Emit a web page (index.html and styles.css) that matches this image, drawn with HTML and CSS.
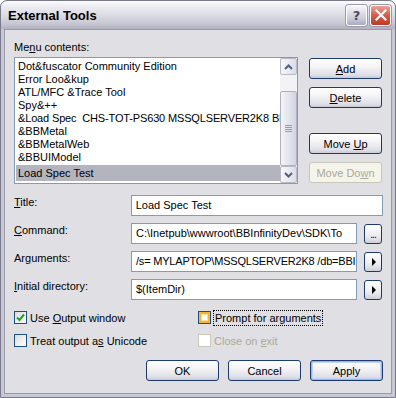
FILE: index.html
```html
<!DOCTYPE html>
<html lang="en">
<head>
  <meta charset="UTF-8" />
  <title>External Tools</title>
  <link rel="stylesheet" href="styles.css">
</head>
<body>
  <div class="window">
    <div class="titlebar">
      <span class="title">External Tools</span>
      <div class="caption-buttons">
        <div class="cap help">?</div>
        <div class="cap close">
          <svg width="12" height="12" viewBox="0 0 12 12"><path d="M1.5 1.5 L10.5 10.5 M10.5 1.5 L1.5 10.5" stroke="#fff" stroke-width="2.2" stroke-linecap="square"/></svg>
        </div>
      </div>
    </div>

    <div class="client">
      <div class="menu-label">Me<u>n</u>u contents:</div>

      <div class="top">
        <div class="listbox">
          <ul class="items">
            <li>Dot&amp;fuscator Community Edition</li>
            <li>Error Loo&amp;kup</li>
            <li>ATL/MFC &amp;Trace Tool</li>
            <li>Spy&amp;++</li>
            <li class="long">&amp;Load Spec&nbsp; CHS-TOT-PS630 MSSQLSERVER2K8 BB</li>
            <li>&amp;BBMetal</li>
            <li>&amp;BBMetalWeb</li>
            <li>&amp;BBUIModel</li>
            <li class="selected">Load Spec Test</li>
          </ul>
          <div class="scrollbar">
            <div class="sb-btn">
              <svg width="9" height="6" viewBox="0 0 9 6"><path d="M1 5 L4.5 1.5 L8 5" fill="none" stroke="#4d6185" stroke-width="2"/></svg>
            </div>
            <div class="sb-track">
              <div class="sb-thumb">
                <span></span><span></span><span></span><span></span>
              </div>
            </div>
            <div class="sb-btn">
              <svg width="9" height="6" viewBox="0 0 9 6"><path d="M1 1 L4.5 4.5 L8 1" fill="none" stroke="#4d6185" stroke-width="2"/></svg>
            </div>
          </div>
        </div>

        <div class="side-buttons">
          <button class="btn"><u>A</u>dd</button>
          <button class="btn"><u>D</u>elete</button>
          <button class="btn move-up">Move <u>U</u>p</button>
          <button class="btn disabled">Move Do<u>w</u>n</button>
        </div>
      </div>

      <div class="fields">
        <div class="field">
          <label><u>T</u>itle:</label>
          <div class="textbox">Load Spec Test</div>
        </div>
        <div class="field">
          <label><u>C</u>ommand:</label>
          <div class="textbox short">C:\Inetpub\wwwroot\BBInfinityDev\SDK\To</div>
          <button class="small-btn dots">...</button>
        </div>
        <div class="field">
          <label>Ar<u>g</u>uments:</label>
          <div class="textbox short tight">/s= MYLAPTOP\MSSQLSERVER2K8 /db=BBI</div>
          <button class="small-btn"><span class="tri"></span></button>
        </div>
        <div class="field">
          <label><u>I</u>nitial directory:</label>
          <div class="textbox short">$(ItemDir)</div>
          <button class="small-btn"><span class="tri"></span></button>
        </div>
      </div>

      <div class="checks">
        <div class="check"><span class="box checked">
          <svg width="9" height="9" viewBox="0 0 9 9"><path d="M1 4.5 L3.5 7 L8 1.5" fill="none" stroke="#21a121" stroke-width="2"/></svg>
        </span><span>Use <u>O</u>utput window</span></div>
        <div class="check"><span class="box hover"></span><span class="focus">Prompt for arguments</span></div>
        <div class="check"><span class="box"></span><span>Treat output a<u>s</u> Unicode</span></div>
        <div class="check disabled"><span class="box"></span><span>Close on <u>e</u>xit</span></div>
      </div>

      <div class="actions">
        <button class="btn">OK</button>
        <button class="btn">Cancel</button>
        <button class="btn default">Apply</button>
      </div>
    </div>
  </div>
</body>
</html>
```

FILE: styles.css
```css
body {
  margin: 0;
  font-family: "Liberation Sans", Arial, sans-serif;
  font-size: 11px;
  background: #ffffff;
}

u {
  text-decoration: underline;
  text-underline-offset: 1px;
}

.window {
  width: 396px;
  height: 398px;
  box-sizing: border-box;
  background: #c8c8d4;
  border: 1px solid #7a7a8c;
  border-radius: 7px 7px 0 0;
  padding: 0 3px 3px 3px;
  display: flex;
  flex-direction: column;
  overflow: hidden;
}

.titlebar {
  height: 28px;
  margin: 0 -3px;
  padding: 0 4px 0 7px;
  display: flex;
  align-items: center;
  justify-content: space-between;
  background: linear-gradient(#fdfdfe 0%, #ececf2 20%, #dcdce4 50%, #c8c8d4 80%, #b0b0c0 100%);
  border-radius: 6px 6px 0 0;
}

.title {
  font-family: "Liberation Sans", Arial, sans-serif;
  font-weight: bold;
  font-size: 13px;
  color: #000;
  margin-top: 1px;
}

.caption-buttons {
  display: flex;
  gap: 3px;
}

.cap {
  width: 19px;
  height: 19px;
  border: 1px solid #fff;
  border-radius: 3px;
  display: flex;
  align-items: center;
  justify-content: center;
  box-shadow: 0 0 0 1px #9a9aaa;
}

.help {
  background: linear-gradient(#f6f6fa, #c8c8da 70%, #a8a8c0);
  color: #4a4a5a;
  font-family: "DejaVu Sans", sans-serif;
  font-weight: bold;
  font-size: 13px;
}

.close {
  background: linear-gradient(#eea398, #d65a49 50%, #c0392b);
}

.client {
  flex: 1;
  background: #e0dfe3;
  border: 1px solid #9a9aaa;
  padding: 11px 8px 0 9px;
  display: flex;
  flex-direction: column;
}

.menu-label {
  line-height: 13px;
  height: 13px;
}

.top {
  display: flex;
  gap: 11px;
  margin-top: 3px;
}

.listbox {
  width: 284px;
  height: 127px;
  box-sizing: border-box;
  border: 1px solid #7f9db9;
  background: #fff;
  display: flex;
  overflow: hidden;
}

.items {
  list-style: none;
  margin: 0;
  padding: 2px 0 0 1px;
  flex: 1;
  overflow: hidden;
  white-space: nowrap;
}

.items li {
  height: 13px;
  line-height: 13px;
  padding-left: 2px;
}

.items li.long {
  letter-spacing: -0.15px;
}

.items li.selected {
  background: #b4b4bf;
  height: 16px;
  line-height: 16px;
  margin-top: 1px;
}

.scrollbar {
  width: 17px;
  display: flex;
  flex-direction: column;
  background: #f3f3f6;
}

.sb-btn {
  height: 17px;
  box-sizing: border-box;
  border: 1px solid #b8b8c8;
  border-radius: 2px;
  background: linear-gradient(90deg, #f8f8fb, #dcdce6);
  display: flex;
  align-items: center;
  justify-content: center;
}

.sb-track {
  flex: 1;
  padding: 16px 0 0;
  display: flex;
  flex-direction: column;
}

.sb-thumb {
  flex: 1;
  box-sizing: border-box;
  border: 1px solid #b0b0c2;
  border-radius: 2px;
  background: linear-gradient(90deg, #f4f4f8, #d4d4e0);
  display: flex;
  flex-direction: column;
  align-items: center;
  justify-content: center;
  gap: 1px;
}

.sb-thumb span {
  width: 7px;
  height: 1px;
  background: #9a9aac;
}

.side-buttons {
  display: flex;
  flex-direction: column;
  gap: 8px;
  padding-top: 1px;
}

.btn {
  width: 73px;
  height: 21px;
  box-sizing: border-box;
  font-family: "Liberation Sans", Arial, sans-serif;
  font-size: 11px;
  color: #000;
  border: 1px solid #1c3a6e;
  border-radius: 3px;
  background: linear-gradient(#ffffff, #f4f4f6 40%, #dedee6 85%, #c8c8d4);
  padding: 0;
}

.side-buttons .move-up {
  margin-top: 17px;
}

.btn.disabled {
  color: #aca899;
  border-color: #c9c7ba;
  background: #f5f4ea;
}

.btn.default {
  box-shadow: inset 0 0 0 1px #9db8e8, inset 0 0 0 2px #c4d4f2;
}

.fields {
  display: flex;
  flex-direction: column;
  gap: 7px;
  margin-top: 11px;
}

.field {
  display: flex;
  align-items: center;
  height: 21px;
}

.field label {
  width: 117px;
  line-height: 13px;
  margin-top: -6px;
}

.textbox {
  width: 253px;
  height: 21px;
  box-sizing: border-box;
  border: 1px solid #7f9db9;
  background: #fff;
  padding: 0 4px;
  line-height: 19px;
  white-space: nowrap;
  overflow: hidden;
}

.textbox.short {
  width: 226px;
}

.textbox.tight {
  letter-spacing: -0.2px;
}

.small-btn {
  width: 18px;
  height: 20px;
  margin-left: 7px;
  box-sizing: border-box;
  border: 1px solid #1c3a6e;
  border-radius: 3px;
  background: linear-gradient(#ffffff, #ececf0 60%, #d0d0da);
  padding: 0;
  display: flex;
  align-items: center;
  justify-content: center;
  font-family: "Liberation Sans", Arial, sans-serif;
  font-size: 11px;
}

.dots {
  align-items: flex-end;
  padding-bottom: 3px;
  font-size: 10px;
  letter-spacing: -1px;
}

.tri {
  width: 0;
  height: 0;
  border-top: 4px solid transparent;
  border-bottom: 4px solid transparent;
  border-left: 4px solid #000;
  margin-left: 1px;
}

.checks {
  display: grid;
  grid-template-columns: 184px 1fr;
  row-gap: 10px;
  margin-top: 11px;
}

.check {
  display: flex;
  align-items: center;
  height: 13px;
  white-space: nowrap;
}

.box {
  width: 13px;
  height: 13px;
  box-sizing: border-box;
  border: 1px solid #1c5180;
  background: linear-gradient(135deg, #dcdcd7, #ffffff);
  margin-right: 3px;
  display: flex;
  align-items: center;
  justify-content: center;
}

.box.hover {
  background: #fff;
  box-shadow: inset 0 0 0 2px #f8b636, inset 0 0 0 3px #fddc9b;
}

.check.disabled {
  color: #aca899;
}

.check.disabled .box {
  border-color: #cac8bb;
  background: #fff;
}

.focus {
  outline: 1px dotted #000;
  padding: 1px 1px;
}

.actions {
  display: flex;
  justify-content: flex-end;
  gap: 9px;
  margin-top: 13px;
}
```
